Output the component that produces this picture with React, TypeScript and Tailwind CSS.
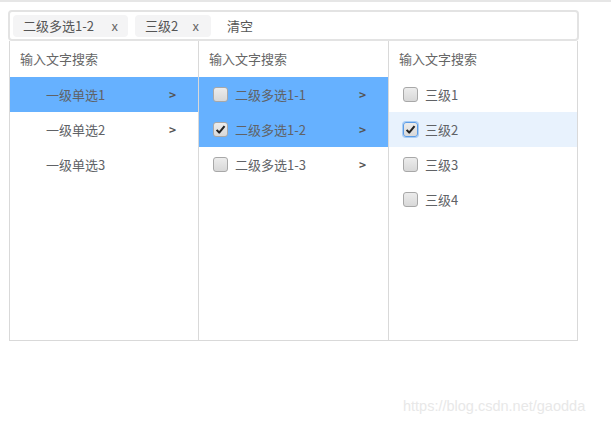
import React from 'react';

const font = { fontFamily: '"Noto Sans CJK SC", "Noto Sans", sans-serif' };

function Box({ checked, focus }: { checked?: boolean; focus?: boolean }) {
    return (
        <span
            className={`flex h-[15px] w-[15px] shrink-0 items-center justify-center rounded-[3px] border bg-gradient-to-b from-[#ececec] to-[#d8d8d8] ${
                focus ? 'border-[#5c9ce6] shadow-[0_0_0_1px_#a9cdf5]' : 'border-[#a8a8a8]'
            }`}
        >
            {checked ? (
                <svg viewBox="0 0 12 12" className="h-[11px] w-[11px]">
                    <path d="M1.8 6.4 L4.6 9.4 L10.4 2.2" fill="none" stroke="#222" strokeWidth="2.2" strokeLinejoin="round" />
                </svg>
            ) : null}
        </span>
    );
}

function Arrow() {
    return <span className="text-[12px] font-bold leading-none text-[#555]">&gt;</span>;
}

function Header() {
    return <div className="flex h-[36px] items-center pl-[10px] text-[13px] text-[#666]">输入文字搜索</div>;
}

export default function App() {
    return (
        <div className="relative h-[424px] w-[611px] overflow-hidden bg-white" style={font}>
            <div className="h-[2px] w-full bg-[#e6e6e6]" />
            <div className="ml-[8px] mt-[8px] w-[571px]">
                <div className="flex h-[31px] items-center gap-[7px] rounded-[4px] border-2 border-[#e3e3e3] px-[3px] text-[13px] text-[#555]">
                    <span className="flex h-[22px] w-[115px] items-center rounded-[4px] bg-[#f4f4f5] pl-[10px]">
                        二级多选1-2
                        <span className="ml-auto mr-[10px] text-[#666]">x</span>
                    </span>
                    <span className="flex h-[22px] w-[76px] items-center rounded-[4px] bg-[#f4f4f5] pl-[10px]">
                        三级2
                        <span className="ml-auto mr-[12px] text-[#666]">x</span>
                    </span>
                    <span className="ml-[9px]">清空</span>
                </div>
                <div className="mx-[1px] flex h-[300px] border-x border-b border-[#d9d9d9] text-[13px] text-[#606266]">
                    <div className="w-[189px] border-r border-[#d9d9d9]">
                        <Header />
                        <div className="flex h-[35px] items-center bg-[#66b1ff] pl-[36px] pr-[22px]">
                            一级单选1<span className="ml-auto"><Arrow /></span>
                        </div>
                        <div className="flex h-[35px] items-center pl-[36px] pr-[22px]">
                            一级单选2<span className="ml-auto"><Arrow /></span>
                        </div>
                        <div className="flex h-[35px] items-center pl-[36px] pr-[22px]">一级单选3</div>
                    </div>
                    <div className="w-[190px] border-r border-[#d9d9d9]">
                        <Header />
                        <div className="flex h-[35px] items-center gap-[7px] bg-[#66b1ff] pl-[14px] pr-[22px]">
                            <Box />二级多选1-1<span className="ml-auto"><Arrow /></span>
                        </div>
                        <div className="flex h-[35px] items-center gap-[7px] bg-[#66b1ff] pl-[14px] pr-[22px]">
                            <Box checked />二级多选1-2<span className="ml-auto"><Arrow /></span>
                        </div>
                        <div className="flex h-[35px] items-center gap-[7px] pl-[14px] pr-[22px]">
                            <Box />二级多选1-3<span className="ml-auto"><Arrow /></span>
                        </div>
                    </div>
                    <div className="flex-1">
                        <Header />
                        <div className="flex h-[35px] items-center gap-[7px] pl-[14px]">
                            <Box />三级1
                        </div>
                        <div className="flex h-[35px] items-center gap-[7px] bg-[#e8f2fd] pl-[14px]">
                            <Box checked focus />三级2
                        </div>
                        <div className="flex h-[35px] items-center gap-[7px] pl-[14px]">
                            <Box />三级3
                        </div>
                        <div className="flex h-[35px] items-center gap-[7px] pl-[14px]">
                            <Box />三级4
                        </div>
                    </div>
                </div>
            </div>
            <div
                className="absolute left-[403px] top-[396px] text-[14.5px] text-[#e8e8e8]"
                style={{ fontFamily: '"Liberation Sans", Arial, sans-serif' }}
            >
                https://blog.csdn.net/gaodda
            </div>
        </div>
    );
}
